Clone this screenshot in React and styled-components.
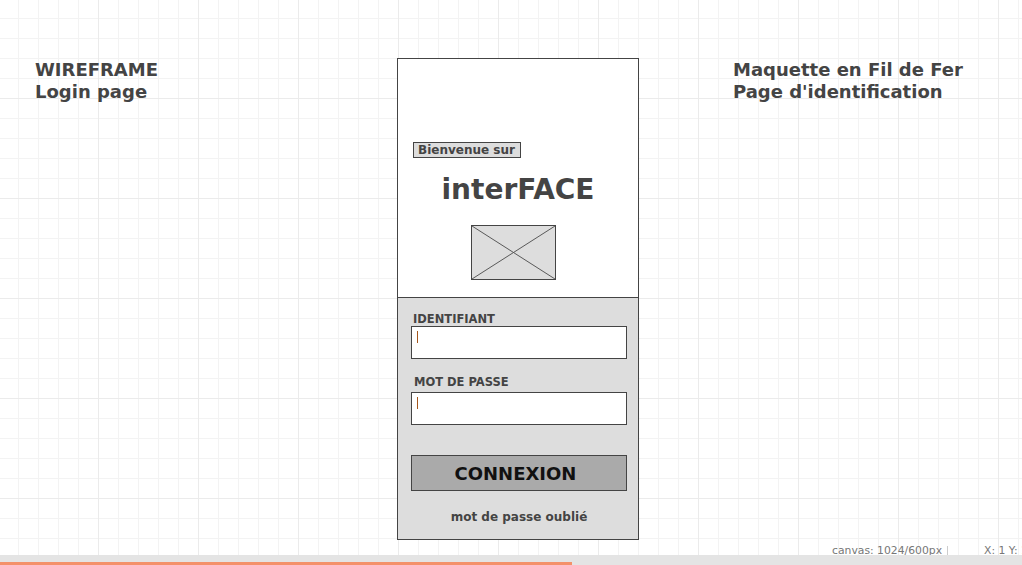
import React from "react";
import styled, { createGlobalStyle } from "styled-components";

const GlobalStyle = createGlobalStyle`
  html, body {
    margin: 0;
    padding: 0;
    background: #fff;
  }
  body {
    font-family: "DejaVu Sans", Verdana, sans-serif;
    overflow: hidden;
  }
`;

const App = () => {
  return (
    <>
      <GlobalStyle />
      <Page>
        <Canvas>
          <Note>
            WIREFRAME
            <br />
            Login page
          </Note>
          <Phone>
            <Header>
              <WelcomeTag>Bienvenue sur</WelcomeTag>
              <Brand>interFACE</Brand>
              <ImagePlaceholder viewBox="0 0 85 55" preserveAspectRatio="none">
                <line x1="0" y1="0" x2="85" y2="55" />
                <line x1="85" y1="0" x2="0" y2="55" />
              </ImagePlaceholder>
            </Header>
            <Form>
              <FieldLabel>IDENTIFIANT</FieldLabel>
              <Field />
              <FieldLabel $shift={1} $top={16}>
                MOT DE PASSE
              </FieldLabel>
              <Field />
              <LoginButton>CONNEXION</LoginButton>
              <ForgotLink>mot de passe oublié</ForgotLink>
            </Form>
          </Phone>
          <Note $right>
            Maquette en Fil de Fer
            <br />
            Page d'identification
          </Note>
          <StatusLine>
            <span>canvas: 1024/600px</span>
            <StatusSep />
            <span>X: 1 Y: 1</span>
          </StatusLine>
        </Canvas>
        <BottomBar>
          <Progress style={{ width: 572 }} />
        </BottomBar>
      </Page>
    </>
  );
};

export default App;

const Page = styled.div`
  width: 1022px;
  height: 565px;
  display: flex;
  flex-direction: column;
  overflow: hidden;
`;

const Canvas = styled.div`
  position: relative;
  flex: 0 0 555px;
  overflow: hidden;
  display: flex;
  align-items: flex-start;
  padding: 58px 0 0 35px;
  box-sizing: border-box;
  background-color: #fff;
  background-image: linear-gradient(to right, #ebebeb 1px, transparent 1px),
    linear-gradient(to bottom, #ebebeb 1px, transparent 1px),
    linear-gradient(to right, #f3f3f3 1px, transparent 1px),
    linear-gradient(to bottom, #f3f3f3 1px, transparent 1px);
  background-size: 100px 100px, 100px 100px, 20px 20px, 20px 20px;
  background-position: -2px -2px, -2px -2px, -2px -2px, -2px -2px;
`;

const Note = styled.div`
  width: ${({ $right }) => ($right ? "auto" : "362px")};
  margin-left: ${({ $right }) => ($right ? "94px" : "0")};
  padding-top: 1px;
  font-size: 18px;
  line-height: 22px;
  font-weight: bold;
  color: #444;
  white-space: nowrap;
`;

const Phone = styled.div`
  width: 242px;
  height: 482px;
  box-sizing: border-box;
  border: 1px solid #444;
  display: flex;
  flex-direction: column;
  background: #fff;
`;

const Header = styled.div`
  flex: 0 0 239px;
  display: flex;
  flex-direction: column;
  align-items: flex-start;
  padding-top: 83px;
  box-sizing: border-box;
  border-bottom: 1px solid #444;
`;

const WelcomeTag = styled.span`
  margin-left: 15px;
  padding: 0 5px 0 4px;
  border: 1px solid #444;
  background: #ddd;
  font-size: 12px;
  line-height: 14px;
  font-weight: bold;
  color: #444;
`;

const Brand = styled.div`
  align-self: stretch;
  margin-top: 15px;
  text-align: center;
  font-size: 28px;
  line-height: 34px;
  font-weight: bold;
  color: #444;
`;

const ImagePlaceholder = styled.svg`
  margin: 18px 0 0 73px;
  width: 85px;
  height: 55px;
  box-sizing: border-box;
  border: 1px solid #444;
  background: #ddd;
  stroke: #555;
  stroke-width: 1;
`;

const Form = styled.div`
  flex: 1;
  background: #ddd;
  display: flex;
  flex-direction: column;
  padding: 14px 11px 0 13px;
`;

const FieldLabel = styled.div`
  margin: ${({ $top }) => $top || 0}px 0 0 ${({ $shift }) => 2 + ($shift || 0)}px;
  font-size: 11.5px;
  line-height: 14px;
  font-weight: bold;
  color: #444;
  & + div {
    margin-top: ${({ $top }) => ($top ? 3 : 0)}px;
  }
`;

const Field = styled.div`
  position: relative;
  height: 33px;
  box-sizing: border-box;
  border: 1px solid #444;
  background: #fff;
  &::before {
    content: "";
    position: absolute;
    left: 5px;
    top: 4px;
    width: 1px;
    height: 12px;
    background: #a5561c;
  }
`;

const LoginButton = styled.div`
  margin-top: 30px;
  height: 36px;
  box-sizing: border-box;
  padding-right: 7px;
  border: 1px solid #444;
  background: #aaa;
  display: flex;
  align-items: center;
  justify-content: center;
  font-size: 18px;
  font-weight: bold;
  color: #111;
`;

const ForgotLink = styled.div`
  margin-top: 19px;
  text-align: center;
  font-size: 12px;
  line-height: 14px;
  font-weight: bold;
  color: #444;
`;

const StatusLine = styled.div`
  position: absolute;
  left: 832px;
  bottom: -5px;
  display: flex;
  align-items: flex-start;
  font-size: 10.8px;
  line-height: 14px;
  color: #777;
  white-space: nowrap;
  & > span:last-child {
    margin-left: 36px;
  }
`;

const StatusSep = styled.i`
  display: block;
  width: 1px;
  height: 14px;
  margin: 2px 0 0 5px;
  background: #ccc;
`;

const BottomBar = styled.div`
  flex: 0 0 10px;
  position: relative;
  background: #e4e4e4;
`;

const Progress = styled.div`
  position: absolute;
  left: 0;
  bottom: 0;
  height: 3px;
  background: #f4916a;
`;
